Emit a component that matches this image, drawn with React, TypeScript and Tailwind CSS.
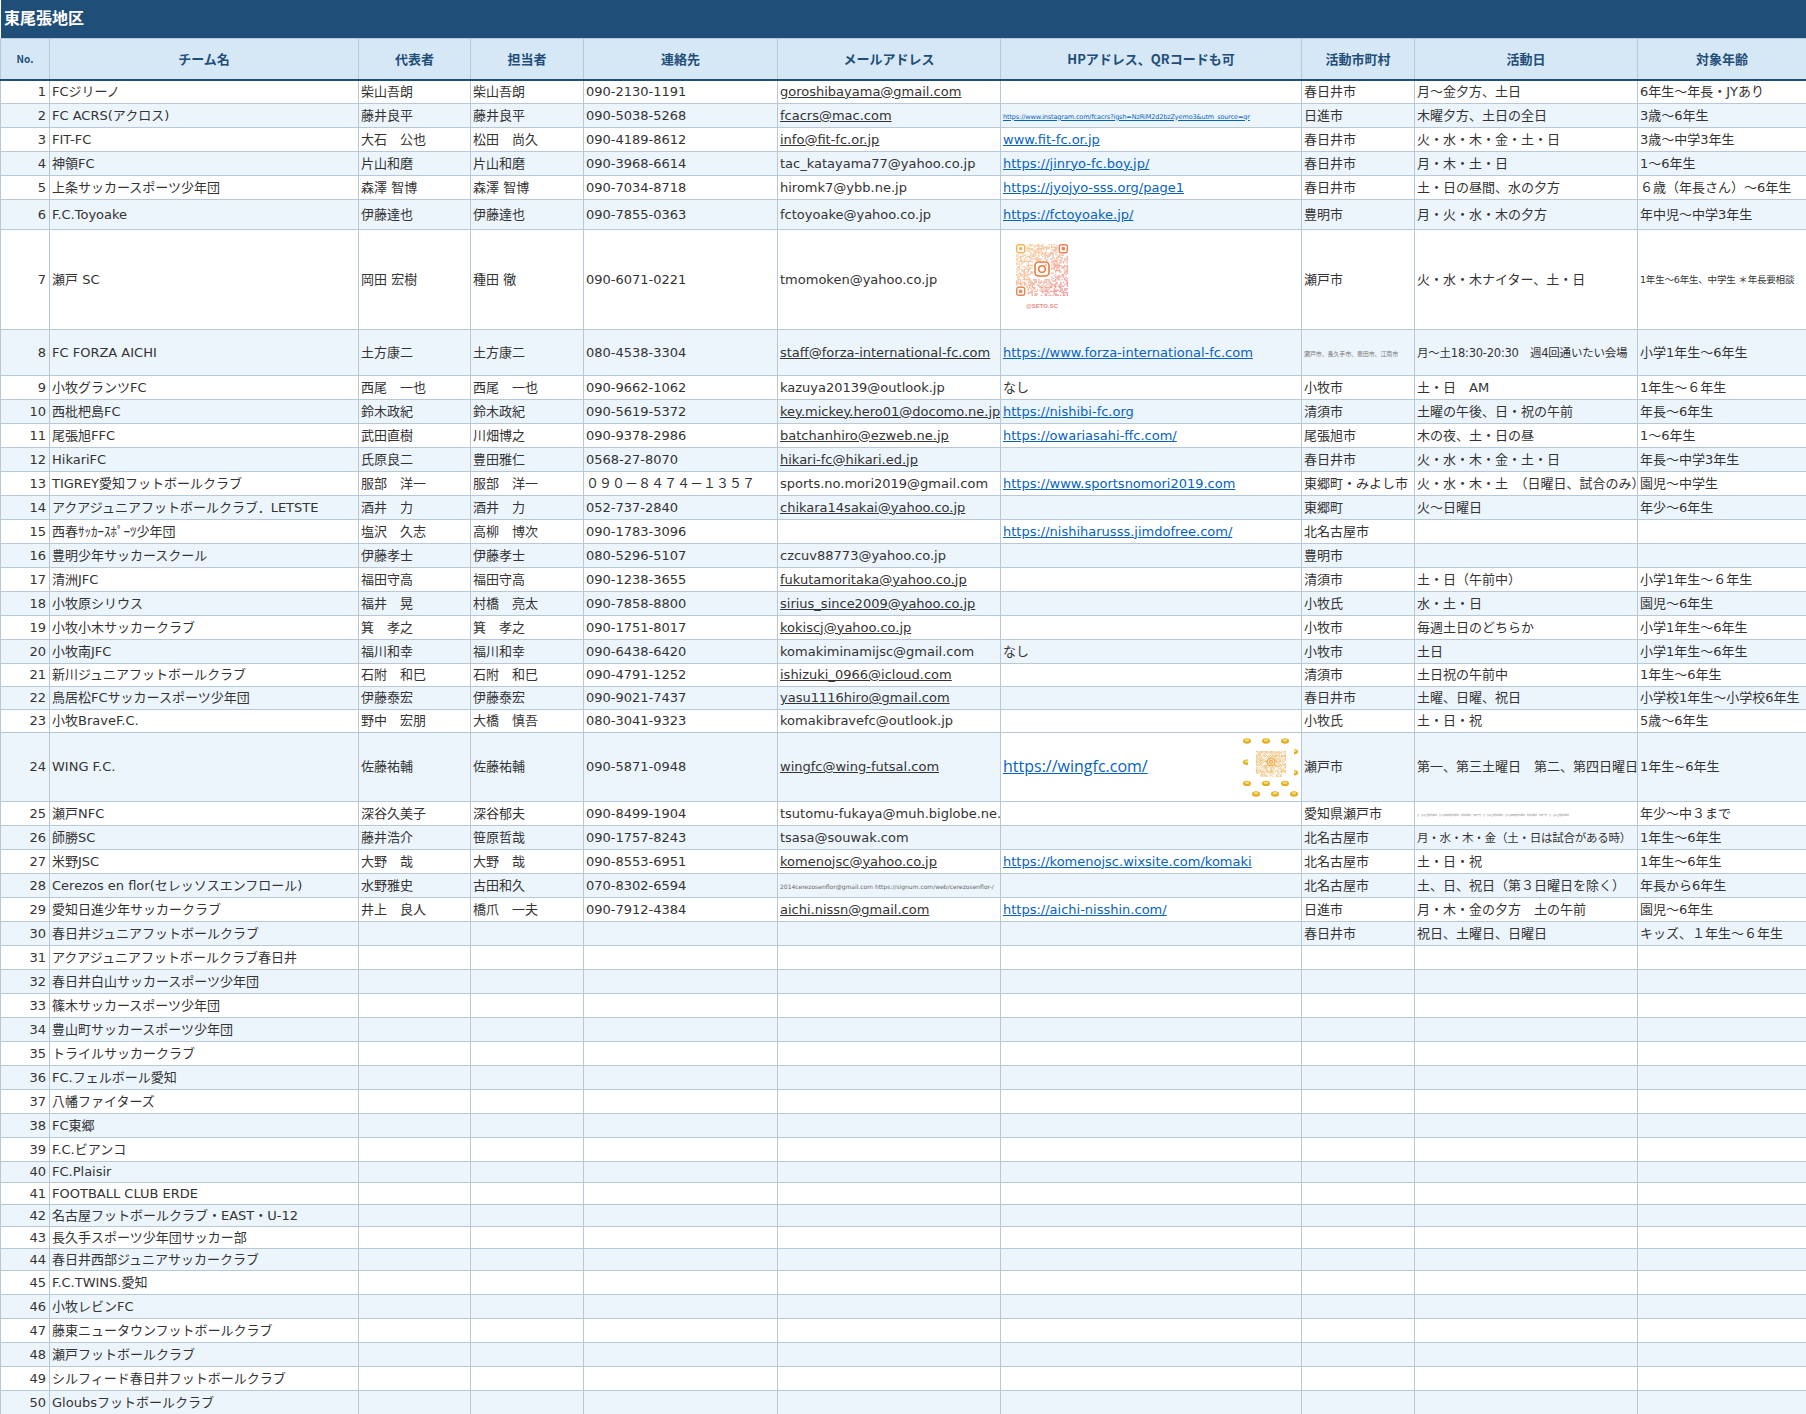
import React from "react";

type Row = {
  n: number; h: number; team: string; rep?: string; mgr?: string; tel?: string;
  mail?: string; mailLink?: boolean; hp?: React.ReactNode; city?: React.ReactNode; day?: React.ReactNode; age?: React.ReactNode; hpWhite?: boolean;
};

const L = ({ children }: { children: React.ReactNode }) => (
  <span className="text-[#0563c1] underline">{children}</span>
);

function mulberry(seed: number) {
  let a = seed;
  return () => {
    a = (a + 0x6d2b79f5) | 0;
    let t = Math.imul(a ^ (a >>> 15), 1 | a);
    t = (t + Math.imul(t ^ (t >>> 7), 61 | t)) ^ t;
    return ((t ^ (t >>> 14)) >>> 0) / 4294967296;
  };
}

function mix(a: number[], b: number[], t: number) {
  return `rgb(${a.map((v, i) => Math.round(v + (b[i] - v) * t)).join(",")})`;
}

function SetoQr() {
  const rnd = mulberry(7);
  const cells: React.ReactNode[] = [];
  const size = 40;
  const s = 52 / size;
  for (let y = 0; y < size; y++) {
    for (let x = 0; x < size; x++) {
      const corner = (x < 8 && y < 8) || (x > 31 && y < 8) || (x < 8 && y > 31);
      const centre = x > 12 && x < 27 && y > 12 && y < 27;
      if (corner || centre || rnd() < 0.52) continue;
      const t = (x + y) / (2 * size);
      cells.push(
        <rect key={`${x}-${y}`} x={x * s} y={y * s} width={s} height={s} fill={mix([248, 205, 130], [232, 120, 130], t)} opacity={0.8} />
      );
    }
  }
  const Eye = ({ x, y, c }: { x: number; y: number; c: string }) => (
    <g>
      <rect x={x} y={y} width={8} height={8} rx={2} fill="none" stroke={c} strokeWidth={1.4} />
      <rect x={x + 2.4} y={y + 2.4} width={3.2} height={3.2} fill={c} />
    </g>
  );
  return (
    <svg width="64" height="70" viewBox="0 0 64 70" className="absolute left-[15px] top-[14px]">
      <g transform="translate(0,0)">
        {cells}
        <Eye x={0.7} y={0.7} c="#f3b35c" />
        <Eye x={43.3} y={0.7} c="#ec7f52" />
        <Eye x={0.7} y={43.3} c="#ee8450" />
        <rect x={19} y={18} width={14} height={14} rx={3.5} fill="none" stroke="#ee7a3c" strokeWidth={1.6} />
        <circle cx={26} cy={25} r={3.3} fill="none" stroke="#ee7a3c" strokeWidth={1.5} />
        <circle cx={30} cy={21} r={0.8} fill="#ee7a3c" />
      </g>
      <text x={26} y={64} textAnchor="middle" fontSize="6" fontWeight="700" fill="#e98c86" fontFamily="'Liberation Sans', sans-serif">@SETO.SC</text>
    </svg>
  );
}

function WingQr() {
  const rnd = mulberry(21);
  const dots: React.ReactNode[] = [];
  const coin = (cx: number, cy: number, k: string) => (
    <g key={k}>
      <ellipse cx={cx} cy={cy} rx={4} ry={2.7} fill="#e2ac24" />
      <ellipse cx={cx} cy={cy - 0.7} rx={2.4} ry={1.3} fill="#f7dc70" />
    </g>
  );
  for (let r = 0; r < 6; r++) {
    for (let c = 0; c < 3; c++) {
      dots.push(coin(4 + c * 19 + (r % 2 ? 9 : 0), 4 + r * 10.6, `${r}-${c}`));
    }
  }
  const cells: React.ReactNode[] = [];
  for (let y = 0; y < 18; y++) {
    for (let x = 0; x < 24; x++) {
      if (rnd() < 0.3) continue;
      cells.push(<rect key={`${x}-${y}`} x={13 + x * 1.25} y={14 + y * 1.25} width={1.25} height={1.25} fill="#efc98c" />);
    }
  }
  return (
    <svg width="56" height="62" viewBox="0 0 56 62" className="absolute right-[2px] top-[4px]">
      {dots}
      <rect x={5} y={9} width={46} height={32} rx={2} fill="#ffffff" />
      {cells}
      <circle cx={28} cy={25} r={4} fill="none" stroke="#eda94a" strokeWidth={1} />
      <circle cx={28} cy={25} r={1.6} fill="none" stroke="#eda94a" strokeWidth={0.8} />
      <text x={28} y={40} textAnchor="middle" fontSize="3" fontWeight="700" fill="#efbd6a" fontFamily="'Liberation Sans', sans-serif">WING_FC_ACA</text>
    </svg>
  );
}

const rows: Row[] = [
  { n: 1, h: 24, team: "FCジリーノ", rep: "柴山吾朗", mgr: "柴山吾朗", tel: "090-2130-1191", mail: "goroshibayama@gmail.com", mailLink: true, city: "春日井市", day: "月～金夕方、土日", age: "6年生～年長・JYあり" },
  { n: 2, h: 24, team: "FC ACRS(アクロス)", rep: "藤井良平", mgr: "藤井良平", tel: "090-5038-5268", mail: "fcacrs@mac.com", mailLink: true, hp: <span className="text-[6.5px] text-[#0563c1] underline tracking-[-0.02em]">https://www.instagram.com/fcacrs?igsh=NzRiM2d2bzZyemo3&amp;utm_source=qr</span>, city: "日進市", day: "木曜夕方、土日の全日", age: "3歳～6年生" },
  { n: 3, h: 24, team: "FIT-FC", rep: "大石　公也", mgr: "松田　尚久", tel: "090-4189-8612", mail: "info@fit-fc.or.jp", mailLink: true, hp: <L>www.fit-fc.or.jp</L>, city: "春日井市", day: "火・水・木・金・土・日", age: "3歳～中学3年生" },
  { n: 4, h: 24, team: "神領FC", rep: "片山和磨", mgr: "片山和磨", tel: "090-3968-6614", mail: "tac_katayama77@yahoo.co.jp", hp: <L>https://jinryo-fc.boy.jp/</L>, city: "春日井市", day: "月・木・土・日", age: "1～6年生" },
  { n: 5, h: 24, team: "上条サッカースポーツ少年団", rep: "森澤 智博", mgr: "森澤 智博", tel: "090-7034-8718", mail: "hiromk7@ybb.ne.jp", hp: <L>https://jyojyo-sss.org/page1</L>, city: "春日井市", day: "土・日の昼間、水の夕方", age: "６歳（年長さん）～6年生" },
  { n: 6, h: 30, team: "F.C.Toyoake", rep: "伊藤達也", mgr: "伊藤達也", tel: "090-7855-0363", mail: "fctoyoake@yahoo.co.jp", hp: <L>https://fctoyoake.jp/</L>, city: "豊明市", day: "月・火・水・木の夕方", age: "年中児～中学3年生" },
  { n: 7, h: 100, team: "瀬戸 SC", rep: "岡田 宏樹", mgr: "種田 徹", tel: "090-6071-0221", mail: "tmomoken@yahoo.co.jp", hp: <SetoQr />, city: "瀬戸市", day: "火・水・木ナイター、土・日", age: <span className="text-[9.5px] tracking-[-0.02em]">1年生～6年生、中学生 ＊年長要相談</span> },
  { n: 8, h: 46, team: "FC FORZA AICHI", rep: "土方康二", mgr: "土方康二", tel: "080-4538-3304", mail: "staff@forza-international-fc.com", mailLink: true, hp: <L>https://www.forza-international-fc.com</L>, city: <span className="text-[6px] tracking-[-0.02em] text-[#777]">瀬戸市、長久手市、豊田市、江南市</span>, day: <span className="text-[11.5px] tracking-[-0.02em]">月～土18:30-20:30　週4回通いたい会場</span>, age: "小学1年生～6年生" },
  { n: 9, h: 24, team: "小牧グランツFC", rep: "西尾　一也", mgr: "西尾　一也", tel: "090-9662-1062", mail: "kazuya20139@outlook.jp", hp: "なし", city: "小牧市", day: "土・日　AM", age: "1年生～６年生" },
  { n: 10, h: 24, team: "西枇杷島FC", rep: "鈴木政紀", mgr: "鈴木政紀", tel: "090-5619-5372", mail: "key.mickey.hero01@docomo.ne.jp", mailLink: true, hp: <L>https://nishibi-fc.org</L>, city: "清須市", day: "土曜の午後、日・祝の午前", age: "年長～6年生" },
  { n: 11, h: 24, team: "尾張旭FFC", rep: "武田直樹", mgr: "川畑博之", tel: "090-9378-2986", mail: "batchanhiro@ezweb.ne.jp", mailLink: true, hp: <L>https://owariasahi-ffc.com/</L>, city: "尾張旭市", day: "木の夜、土・日の昼", age: "1～6年生" },
  { n: 12, h: 24, team: "HikariFC", rep: "氏原良二", mgr: "豊田雅仁", tel: "0568-27-8070", mail: "hikari-fc@hikari.ed.jp", mailLink: true, city: "春日井市", day: "火・水・木・金・土・日", age: "年長～中学3年生" },
  { n: 13, h: 24, team: "TIGREY愛知フットボールクラブ", rep: "服部　洋一", mgr: "服部　洋一", tel: "０９０－８４７４－１３５７", mail: "sports.no.mori2019@gmail.com", hp: <L>https://www.sportsnomori2019.com</L>, city: "東郷町・みよし市", day: "火・水・木・土　（日曜日、試合のみ）", age: "園児～中学生" },
  { n: 14, h: 24, team: "アクアジュニアフットボールクラブ．LETSTE", rep: "酒井　力", mgr: "酒井　力", tel: "052-737-2840", mail: "chikara14sakai@yahoo.co.jp", mailLink: true, city: "東郷町", day: "火～日曜日", age: "年少～6年生" },
  { n: 15, h: 24, team: "西春ｻｯｶｰｽﾎﾟｰﾂ少年団", rep: "塩沢　久志", mgr: "高柳　博次", tel: "090-1783-3096", hp: <L>https://nishiharusss.jimdofree.com/</L>, city: "北名古屋市" },
  { n: 16, h: 24, team: "豊明少年サッカースクール", rep: "伊藤孝士", mgr: "伊藤孝士", tel: "080-5296-5107", mail: "czcuv88773@yahoo.co.jp", city: "豊明市" },
  { n: 17, h: 24, team: "清洲JFC", rep: "福田守高", mgr: "福田守高", tel: "090-1238-3655", mail: "fukutamoritaka@yahoo.co.jp", mailLink: true, city: "清須市", day: "土・日（午前中）", age: "小学1年生～６年生" },
  { n: 18, h: 24, team: "小牧原シリウス", rep: "福井　晃", mgr: "村橋　亮太", tel: "090-7858-8800", mail: "sirius_since2009@yahoo.co.jp", mailLink: true, city: "小牧氏", day: "水・土・日", age: "園児～6年生" },
  { n: 19, h: 24, team: "小牧小木サッカークラブ", rep: "箕　孝之", mgr: "箕　孝之", tel: "090-1751-8017", mail: "kokiscj@yahoo.co.jp", mailLink: true, city: "小牧市", day: "毎週土日のどちらか", age: "小学1年生～6年生" },
  { n: 20, h: 24, team: "小牧南JFC", rep: "福川和幸", mgr: "福川和幸", tel: "090-6438-6420", mail: "komakiminamijsc@gmail.com", hp: "なし", city: "小牧市", day: "土日", age: "小学1年生～6年生" },
  { n: 21, h: 23, team: "新川ジュニアフットボールクラブ", rep: "石附　和巳", mgr: "石附　和巳", tel: "090-4791-1252", mail: "ishizuki_0966@icloud.com", mailLink: true, city: "清須市", day: "土日祝の午前中", age: "1年生～6年生" },
  { n: 22, h: 23, team: "鳥居松FCサッカースポーツ少年団", rep: "伊藤泰宏", mgr: "伊藤泰宏", tel: "090-9021-7437", mail: "yasu1116hiro@gmail.com", mailLink: true, city: "春日井市", day: "土曜、日曜、祝日", age: "小学校1年生～小学校6年生" },
  { n: 23, h: 23, team: "小牧BraveF.C.", rep: "野中　宏朋", mgr: "大橋　慎吾", tel: "080-3041-9323", mail: "komakibravefc@outlook.jp", city: "小牧氏", day: "土・日・祝", age: "5歳～6年生" },
  { n: 24, h: 69, team: "WING F.C.", rep: "佐藤祐輔", mgr: "佐藤祐輔", tel: "090-5871-0948", mail: "wingfc@wing-futsal.com", mailLink: true, hpWhite: true, hp: <><span className="text-[16px] font-['Open_Sans',sans-serif] text-[#0563c1] underline">https://wingfc.com/</span><WingQr /></>, city: "瀬戸市", day: "第一、第三土曜日　第二、第四日曜日", age: "1年生~6年生" },
  { n: 25, h: 23, team: "瀬戸NFC", rep: "深谷久美子", mgr: "深谷郁夫", tel: "090-8499-1904", mail: "tsutomu-fukaya@muh.biglobe.ne.jp;", city: "愛知県瀬戸市", day: <span className="text-[2px] text-[#777]">第一第三土曜日午前中、第二第四日曜日午前中、祝日午前中、平日夕方、第一第三土曜日午前中、第二第四日曜日午前中、祝日午前中、平日夕方、第一第三土曜日午前中</span>, age: "年少～中３まで" },
  { n: 26, h: 24, team: "師勝SC", rep: "藤井浩介", mgr: "笹原哲哉", tel: "090-1757-8243", mail: "tsasa@souwak.com", city: "北名古屋市", day: <span className="text-[11.5px] tracking-[-0.02em]">月・水・木・金（土・日は試合がある時）</span>, age: "1年生～6年生" },
  { n: 27, h: 24, team: "米野JSC", rep: "大野　哉", mgr: "大野　哉", tel: "090-8553-6951", mail: "komenojsc@yahoo.co.jp", mailLink: true, hp: <L>https://komenojsc.wixsite.com/komaki</L>, city: "北名古屋市", day: "土・日・祝", age: "1年生～6年生" },
  { n: 28, h: 24, team: "Cerezos en flor(セレッソスエンフロール)", rep: "水野雅史", mgr: "古田和久", tel: "070-8302-6594", mail: "tiny", city: "北名古屋市", day: "土、日、祝日（第３日曜日を除く）", age: "年長から6年生" },
  { n: 29, h: 24, team: "愛知日進少年サッカークラブ", rep: "井上　良人", mgr: "橋爪　一夫", tel: "090-7912-4384", mail: "aichi.nissn@gmail.com", mailLink: true, hp: <L>https://aichi-nisshin.com/</L>, city: "日進市", day: "月・木・金の夕方　土の午前", age: "園児～6年生" },
  { n: 30, h: 24, team: "春日井ジュニアフットボールクラブ", city: "春日井市", day: "祝日、土曜日、日曜日", age: "キッズ、１年生～６年生" },
  { n: 31, h: 24, team: "アクアジュニアフットボールクラブ春日井" },
  { n: 32, h: 24, team: "春日井白山サッカースポーツ少年団" },
  { n: 33, h: 24, team: "篠木サッカースポーツ少年団" },
  { n: 34, h: 24, team: "豊山町サッカースポーツ少年団" },
  { n: 35, h: 24, team: "トライルサッカークラブ" },
  { n: 36, h: 24, team: "FC.フェルボール愛知" },
  { n: 37, h: 24, team: "八幡ファイターズ" },
  { n: 38, h: 24, team: "FC東郷" },
  { n: 39, h: 24, team: "F.C.ビアンコ" },
  { n: 40, h: 21, team: "FC.Plaisir" },
  { n: 41, h: 22, team: "FOOTBALL CLUB ERDE" },
  { n: 42, h: 22, team: "名古屋フットボールクラブ・EAST・U-12" },
  { n: 43, h: 22, team: "長久手スポーツ少年団サッカー部" },
  { n: 44, h: 22, team: "春日井西部ジュニアサッカークラブ" },
  { n: 45, h: 24, team: "F.C.TWINS.愛知" },
  { n: 46, h: 24, team: "小牧レビンFC" },
  { n: 47, h: 24, team: "藤東ニュータウンフットボールクラブ" },
  { n: 48, h: 24, team: "瀬戸フットボールクラブ" },
  { n: 49, h: 24, team: "シルフィード春日井フットボールクラブ" },
  { n: 50, h: 24, team: "Gloubsフットボールクラブ" },
];

const heads = ["チーム名", "代表者", "担当者", "連絡先", "メールアドレス", "HPアドレス、QRコードも可", "活動市町村", "活動日", "対象年齢"];
const widths = ["w-[49px]", "w-[309px]", "w-[112px]", "w-[113px]", "w-[194px]", "w-[223px]", "w-[301px]", "w-[113px]", "w-[223px]", "w-[169px]"];
const td = "border border-[#b7c8d8] px-[2px] overflow-hidden whitespace-nowrap align-middle";

export default function App() {
  return (
    <div className="w-[1806px] bg-white text-[13px] leading-[20px] text-[#333333] font-['DejaVu_Sans','Noto_Sans_CJK_JP',sans-serif]">
      <div className="h-[38px] bg-[#1f4e79] border-l border-white pl-[3px] pt-[5px] text-[16px] leading-[24px] font-bold text-white font-['Noto_Sans_CJK_JP',sans-serif]">
        東尾張地区
      </div>
      <table className="w-[1806px] table-fixed border-collapse">
        <colgroup>
          {widths.map((w, i) => <col key={i} className={w} />)}
        </colgroup>
        <thead>
          <tr className="h-[41px] bg-[#d6e8f5] font-bold text-[#1f4e79] font-['Noto_Sans_CJK_JP',sans-serif]">
            <th className="border border-[#b7c8d8] border-b-2 border-b-[#1f4e79] text-[10px] font-bold">No.</th>
            {heads.map((h) => (
              <th key={h} className="border border-[#b7c8d8] border-b-2 border-b-[#1f4e79] text-[13px] font-bold">{h}</th>
            ))}
          </tr>
        </thead>
        <tbody>
          {rows.map((r) => (
            <tr key={r.n} className={r.n % 2 === 0 ? "bg-[#edf5fc]" : "bg-white"} style={{ height: r.h }}>
              <td className={`${td} text-right pr-[3px]`}>{r.n}</td>
              <td className={td}>{r.team}</td>
              <td className={td}>{r.rep}</td>
              <td className={td}>{r.mgr}</td>
              <td className={td}>{r.tel}</td>
              <td className={td}>
                {r.mail === "tiny" ? (
                  <span className="text-[6px] text-[#666666]">2014cerezosenflor@gmail.com https://signum.com/web/cerezosenflor-/</span>
                ) : r.mailLink ? (
                  <span className="underline">{r.mail}</span>
                ) : r.mail}
              </td>
              <td className={`${td} relative ${r.hpWhite ? "bg-white" : ""}`}>{r.hp}</td>
              <td className={td}>{r.city}</td>
              <td className={td}>{r.day}</td>
              <td className={td}>{r.age}</td>
            </tr>
          ))}
        </tbody>
      </table>
    </div>
  );
}
